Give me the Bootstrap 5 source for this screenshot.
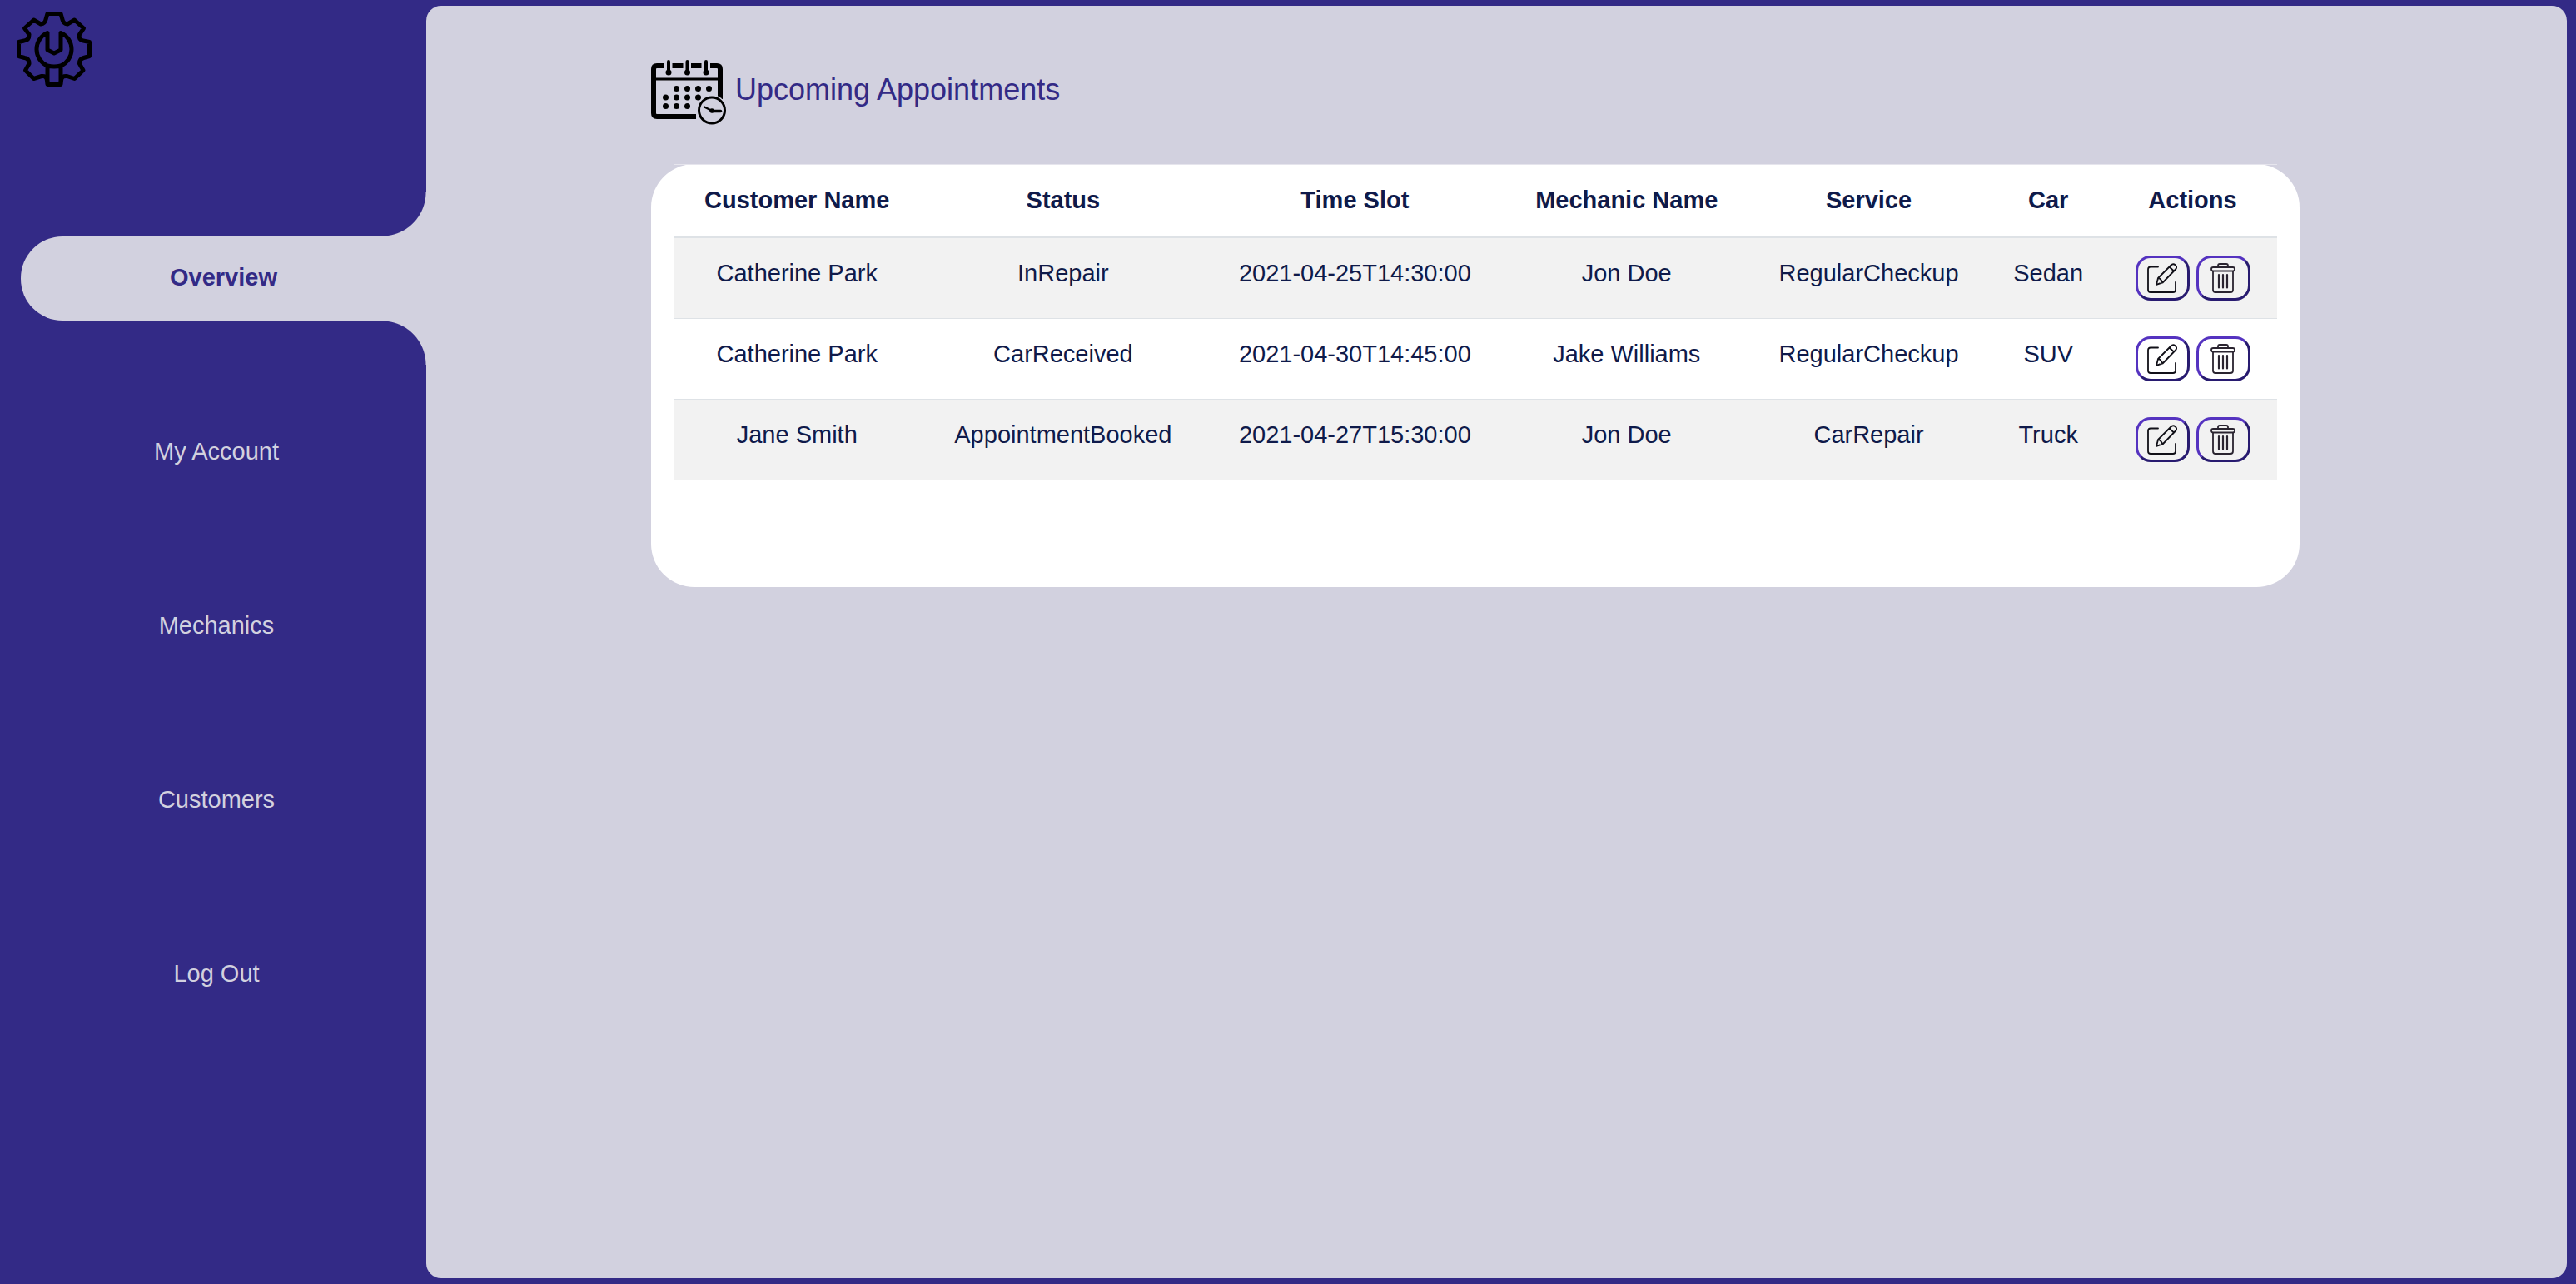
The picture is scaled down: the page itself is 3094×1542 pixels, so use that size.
<!DOCTYPE html>
<html lang="en">
<head>
<meta charset="utf-8">
<meta name="viewport" content="width=device-width, initial-scale=1">
<title>Upcoming Appointments</title>
<link href="https://cdn.jsdelivr.net/npm/bootstrap@5.3.0/dist/css/bootstrap.min.css" rel="stylesheet">
<style>
  :root { --brand: #332a86; --surface: #d2d1df; --ink: #0f1a4a; }
  body { background: var(--brand); color: var(--ink); font-family: "Liberation Sans", Arial, sans-serif; font-size: 29px; line-height: 42px; padding: 7px 11px 7px 0; }
  .side { width: 512px; }
  .brand-link { margin: 7px 0 0 20px; height: 90px; width: 90px; }
  .brand-link svg, .title-icon { width: 90px; height: 90px; }
  .side-nav { margin-top: 180px; gap: 108px; padding-left: 8px; }
  .side-link { height: 101px; padding-bottom: 4px; color: var(--surface); text-decoration: none; }
  .side-link.active { position: relative; margin-left: 17px; background: var(--surface); color: var(--brand); border-radius: 50px 0 0 50px; }
  .side-link.active::before, .side-link.active::after { content: ""; position: absolute; right: 0; width: 53px; height: 53px; }
  .side-link.active::before { bottom: 100%; background: radial-gradient(circle at 0 0, var(--brand) 52px, var(--surface) 53px); }
  .side-link.active::after { top: 100%; background: radial-gradient(circle at 0 100%, var(--brand) 52px, var(--surface) 53px); }
  .panel { background: var(--surface); border-radius: 18px; padding-top: 56px; }
  .inner { width: 77%; margin-left: 10.5%; }
  .page-title { font-size: 36px; line-height: 54px; color: var(--brand); gap: 11px; font-weight: 400; margin-bottom: 45px; }
  .sheet { background: #fff; border-radius: 52px; padding: 0 27px; min-height: 508px; }
  .slots { --bs-table-color: var(--ink); --bs-table-striped-color: var(--ink); --bs-table-striped-bg: #f2f2f2; --bs-table-bg: transparent; color: var(--ink); margin-top: -1px; border-color: #dee2e6; table-layout: fixed; }
  .slots > :not(caption) > * > * { padding: 21px 0; border-bottom: 1px solid #dee2e6; }
  .slots > thead > tr > th { padding-bottom: 22px; border-top: 1px solid #e6e5ed; border-bottom: 3px solid #dee2e6; }
  .slots > tbody > tr > td { height: 97px; }
  .slots > tbody > tr:last-child > td { border-bottom: 0; }
  .w-name { width: 15.4%; } .w-status { width: 17.8%; } .w-time { width: 18.6%; } .w-mech { width: 15.3%; }
  .w-serv { width: 14.9%; } .w-car { width: 7.5%; } .w-act { width: 10.5%; }
  .act-btn { width: 65px; height: 54px; padding: 0; border: 3px solid; border-color: #5533c0 #281b70 #281b70 #5533c0; border-radius: 18px; background: none; }
  .act-btn svg { width: 36px; height: 36px; }
</style>
</head>
<body class="d-flex min-vh-100">
<aside class="side flex-shrink-0">
  <a href="#" class="brand-link d-block" aria-label="Home">
    <svg viewBox="0 0 90 90" fill="none" stroke="#000" stroke-width="5" stroke-linejoin="round" stroke-linecap="round">
      <path d="M37.500 87.500L36 80.500Q35 77 30 77.500L20.500 80.500L10.500 70.500L15 62.500Q15 56 9.500 55.500L2.500 53.500V36.500L9 35Q15 34.500 15 27.500L9.500 20L20.500 10L29 15Q34 14.500 35 9.500L37 2.500H53L55 9.500Q56 14.500 61 15L69.500 10L80.500 20L75.500 27.500Q74 34 80 35L87.500 36.500V53.500L80.500 55.500Q75 57 75.500 62.500L80 70.500L69.500 80.500L60.500 77.500Q55 77 54 80.500L52.500 87.500Z"/>
      <path d="M37 66V87M53 66V87M37 65A21.500 21.500 0 0 1 37 25.500V46L45 50L53 46V25.500A21.500 21.500 0 0 1 53 65Q45 67 37 65"/>
    </svg>
  </a>
  <nav class="side-nav nav flex-column flex-nowrap">
    <a href="#" class="side-link active fw-bold d-flex align-items-center justify-content-center" aria-current="page">Overview</a>
    <a href="#" class="side-link d-flex align-items-center justify-content-center">My Account</a>
    <a href="#" class="side-link d-flex align-items-center justify-content-center">Mechanics</a>
    <a href="#" class="side-link d-flex align-items-center justify-content-center">Customers</a>
    <a href="#" class="side-link d-flex align-items-center justify-content-center">Log Out</a>
  </nav>
</aside>
<main class="panel flex-grow-1">
  <div class="inner">
    <h1 class="page-title d-flex align-items-center">
      <svg class="title-icon flex-shrink-0" viewBox="0 0 90 90" aria-hidden="true">
        <path d="M16 16H7Q3 16 3 20V73Q3 77 7 77H54M71 16H79Q83 16 83 20V56M25.500 16H38.500M48 16H60.500" fill="none" stroke="#000" stroke-width="6"/>
        <path d="M5 32H81" stroke="#000" stroke-width="3"/>
        <path d="M21 11V24M43.500 11V24M66 11V24" stroke="#000" stroke-width="4" stroke-linecap="round"/>
        <g><circle cx="21" cy="24" r="3.500"/><circle cx="43.500" cy="24" r="3.500"/><circle cx="66" cy="24" r="3.500"/>
        <circle cx="30.500" cy="43.500" r="3.500"/><circle cx="43.500" cy="43.500" r="3.500"/><circle cx="56.500" cy="43.500" r="3.500"/><circle cx="69.500" cy="43.500" r="3.500"/>
        <circle cx="17.500" cy="54" r="3.500"/><circle cx="30.500" cy="54" r="3.500"/><circle cx="43.500" cy="54" r="3.500"/><circle cx="56.500" cy="54" r="3.500"/>
        <circle cx="17.500" cy="64.500" r="3.500"/><circle cx="30.500" cy="64.500" r="3.500"/><circle cx="43.500" cy="64.500" r="3.500"/></g>
        <circle cx="73" cy="69.500" r="18.500" fill="#d2d1df"/>
        <circle cx="73" cy="69.500" r="15.500" fill="none" stroke="#000" stroke-width="3"/>
        <path d="M64 65.500L73 70" stroke="#000" stroke-width="2.500" stroke-linecap="round"/>
        <path d="M73 70.500H83.500" stroke="#000" stroke-width="3.500" stroke-linecap="round"/><circle cx="73" cy="70" r="2.800"/>
      </svg>
      <span>Upcoming Appointments</span>
    </h1>
    <section class="sheet">
      <table class="table table-striped slots text-center align-top mb-0">
        <thead>
          <tr>
            <th scope="col" class="w-name">Customer Name</th>
            <th scope="col" class="w-status">Status</th>
            <th scope="col" class="w-time">Time Slot</th>
            <th scope="col" class="w-mech">Mechanic Name</th>
            <th scope="col" class="w-serv">Service</th>
            <th scope="col" class="w-car">Car</th>
            <th scope="col" class="w-act">Actions</th>
          </tr>
        </thead>
        <tbody>
          <tr>
            <td>Catherine Park</td><td>InRepair</td><td>2021-04-25T14:30:00</td><td>Jon Doe</td><td>RegularCheckup</td><td>Sedan</td>
            <td><div class="d-flex justify-content-center gap-2">
              <button type="button" class="act-btn d-flex align-items-center justify-content-center" aria-label="Edit"><svg><use href="#i-edit"/></svg></button>
              <button type="button" class="act-btn d-flex align-items-center justify-content-center" aria-label="Delete"><svg><use href="#i-bin"/></svg></button>
            </div></td>
          </tr>
          <tr>
            <td>Catherine Park</td><td>CarReceived</td><td>2021-04-30T14:45:00</td><td>Jake Williams</td><td>RegularCheckup</td><td>SUV</td>
            <td><div class="d-flex justify-content-center gap-2">
              <button type="button" class="act-btn d-flex align-items-center justify-content-center" aria-label="Edit"><svg><use href="#i-edit"/></svg></button>
              <button type="button" class="act-btn d-flex align-items-center justify-content-center" aria-label="Delete"><svg><use href="#i-bin"/></svg></button>
            </div></td>
          </tr>
          <tr>
            <td>Jane Smith</td><td>AppointmentBooked</td><td>2021-04-27T15:30:00</td><td>Jon Doe</td><td>CarRepair</td><td>Truck</td>
            <td><div class="d-flex justify-content-center gap-2">
              <button type="button" class="act-btn d-flex align-items-center justify-content-center" aria-label="Edit"><svg><use href="#i-edit"/></svg></button>
              <button type="button" class="act-btn d-flex align-items-center justify-content-center" aria-label="Delete"><svg><use href="#i-bin"/></svg></button>
            </div></td>
          </tr>
        </tbody>
      </table>
    </section>
  </div>
</main>
<svg class="d-none">
  <symbol id="i-edit" viewBox="0 0 36 36">
    <g fill="none" stroke="#111018" stroke-width="1.800" stroke-linecap="round" stroke-linejoin="round">
      <path d="M13 4.500H4Q1 4.500 1 7.500V32Q1 35 4 35H31Q34 35 34 32V23"/>
      <path d="M11 26L13 18L28.500 2.500Q31 0 33.700 2.300Q36.500 5 34 7.500L18.500 23.500ZM13 18Q16 18 18.500 23.500M26.500 4.500L32 9.500M11 26L14.500 24.500"/>
    </g>
  </symbol>
  <symbol id="i-bin" viewBox="0 0 36 36">
    <g fill="none" stroke="#2a2430" stroke-width="1.800" stroke-linejoin="round" stroke-linecap="round">
      <rect x="4" y="5" width="28" height="4.500" rx="2.200"/>
      <path d="M12 5V3Q12 1 14 1H22Q24 1 24 3V5M6 10V32Q6 35 9 35H27Q30 35 30 32V10"/>
      <path d="M13 14V29.500M18 14V29.500M23 14V29.500" stroke-width="2.200"/>
    </g>
  </symbol>
</svg>
<script src="https://cdn.jsdelivr.net/npm/bootstrap@5.3.0/dist/js/bootstrap.bundle.min.js"></script>
</body>
</html>
